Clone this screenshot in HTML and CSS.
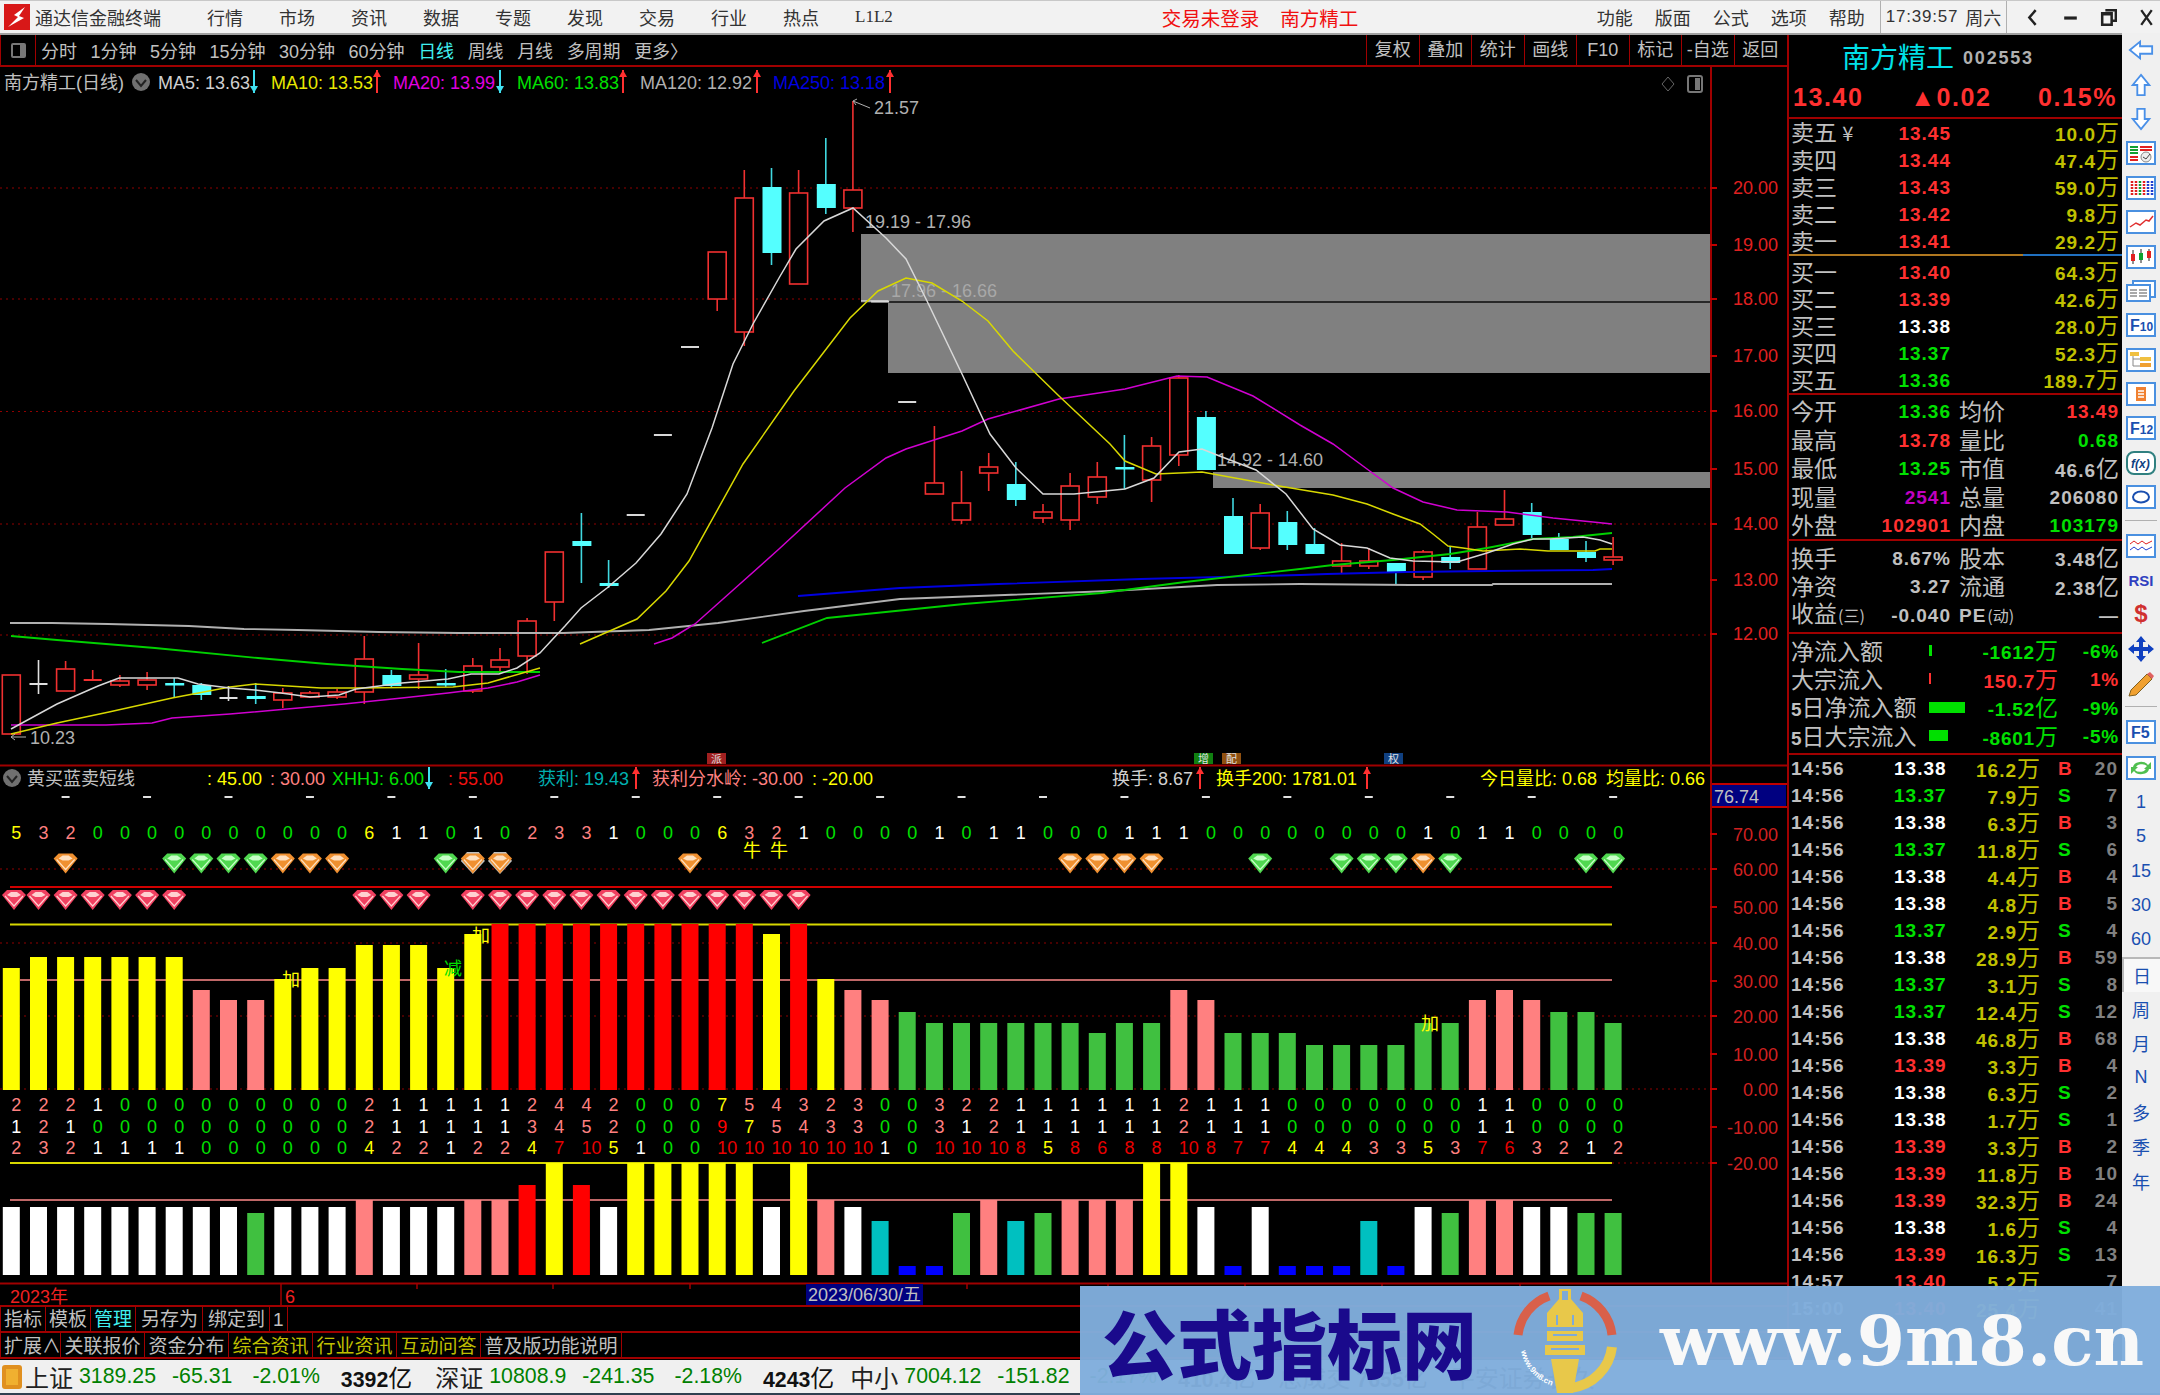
FILE: index.html
```html
<!DOCTYPE html>
<html lang="zh-CN">
<head>
	<meta charset="UTF-8">
	<title>通达信金融终端</title>
	<link rel="stylesheet" href="styles.css">
</head>
<body>
	<!-- 标题栏 -->
	<div class="title-bar">
		<svg class="app-logo" viewBox="0 0 26 26"><rect width="26" height="26" fill="#d81818"/><path d="M21 3 L10 11 L14 13 L4 23 L20 14 L15 12 Z" fill="#fff"/></svg>
		<span class="app-name">通达信金融终端</span>
		<div class="menu">
			<span>行情</span><span>市场</span><span>资讯</span><span>数据</span><span>专题</span><span>发现</span><span>交易</span><span>行业</span><span>热点</span><span class="menu-l2">L1L2</span>
		</div>
		<div class="title-mid"><span>交易未登录</span><span>南方精工</span></div>
		<div class="menu menu-right">
			<span>功能</span><span>版面</span><span>公式</span><span>选项</span><span>帮助</span>
		</div>
		<div class="clock"><span class="clock-time">17:39:57</span><span>周六</span></div>
		<div class="win-btns">
			<svg viewBox="0 0 16 20"><path d="M11 3 L5 10 L11 17" fill="none" stroke="#222" stroke-width="2.4"/></svg>
			<svg viewBox="0 0 16 20"><rect x="2" y="9" width="12" height="3" fill="#222"/></svg>
			<svg viewBox="0 0 16 20"><path d="M5 3 H15 V13 H12 M2 7 H11 V17 H2 Z M2 7 V6 H11 V7" fill="none" stroke="#222" stroke-width="2.4"/></svg>
			<svg viewBox="0 0 16 20"><path d="M3 3 L13 17 M13 3 L3 17" fill="none" stroke="#222" stroke-width="2.2"/></svg>
		</div>
	</div>

	<div class="main">
		<div class="left-col">
			<!-- 周期工具条 -->
			<div class="tool-bar">
				<div class="tool-switch"><i class="switch-ico"></i></div>
				<div class="period">
					<span>分时</span><span>1分钟</span><span>5分钟</span><span>15分钟</span><span>30分钟</span><span>60分钟</span><span class="period-on">日线</span><span>周线</span><span>月线</span><span>多周期</span><span>更多〉</span>
				</div>
				<div class="tool-btns">
					<span>复权</span><span>叠加</span><span>统计</span><span>画线</span><span>F10</span><span>标记</span><span>-自选</span><span>返回</span>
				</div>
			</div>

			<!-- K线和指标都画在这里,见 script.js -->
			<svg id="cv" class="cv" viewBox="0 66 1787 1240" width="1787" height="1240"></svg>

			<div class="tab-row">
				<span>指标</span><span>模板</span><span class="tab-on">管理</span><span>另存为</span><span>绑定到</span><span>1</span>
			</div>
			<div class="tab-row tab-row2">
				<span>扩展∧</span><span>关联报价</span><span>资金分布</span><span class="tab-y">综合资讯</span><span class="tab-y">行业资讯</span><span class="tab-y">互动问答</span><span>普及版功能说明</span>
			</div>
		</div>

		<!-- 右侧盘口 -->
		<div class="quote">
			<div class="q-name"><span class="q-title">南方精工</span><span class="q-code">002553</span></div>
			<div class="q-price"><span>13.40</span><span>▲0.02</span><span>0.15%</span></div>

			<div class="q-sec q-sell">
				<div class="q-row"><div class="half"><span class="lb">卖五 <small>¥</small></span><b class="red">13.45</b></div><div class="half end"><b class="vol">10.0<em>万</em></b></div></div>
				<div class="q-row"><div class="half"><span class="lb">卖四</span><b class="red">13.44</b></div><div class="half end"><b class="vol">47.4<em>万</em></b></div></div>
				<div class="q-row"><div class="half"><span class="lb">卖三</span><b class="red">13.43</b></div><div class="half end"><b class="vol">59.0<em>万</em></b></div></div>
				<div class="q-row"><div class="half"><span class="lb">卖二</span><b class="red">13.42</b></div><div class="half end"><b class="vol">9.8<em>万</em></b></div></div>
				<div class="q-row"><div class="half"><span class="lb">卖一</span><b class="red">13.41</b></div><div class="half end"><b class="vol">29.2<em>万</em></b></div></div>
			</div>
			<div class="q-split"><i></i></div>
			<div class="q-sec q-buy">
				<div class="q-row"><div class="half"><span class="lb">买一</span><b class="red">13.40</b></div><div class="half end"><b class="vol">64.3<em>万</em></b></div></div>
				<div class="q-row"><div class="half"><span class="lb">买二</span><b class="red">13.39</b></div><div class="half end"><b class="vol">42.6<em>万</em></b></div></div>
				<div class="q-row"><div class="half"><span class="lb">买三</span><b class="wht">13.38</b></div><div class="half end"><b class="vol">28.0<em>万</em></b></div></div>
				<div class="q-row"><div class="half"><span class="lb">买四</span><b class="grn">13.37</b></div><div class="half end"><b class="vol">52.3<em>万</em></b></div></div>
				<div class="q-row"><div class="half"><span class="lb">买五</span><b class="grn">13.36</b></div><div class="half end"><b class="vol">189.7<em>万</em></b></div></div>
			</div>

			<div class="q-sec q-info">
				<div class="q-row"><div class="half"><span class="lb">今开</span><b class="grn">13.36</b></div><div class="half"><span class="lb">均价</span><b class="red">13.49</b></div></div>
				<div class="q-row"><div class="half"><span class="lb">最高</span><b class="red">13.78</b></div><div class="half"><span class="lb">量比</span><b class="grn">0.68</b></div></div>
				<div class="q-row"><div class="half"><span class="lb">最低</span><b class="grn">13.25</b></div><div class="half"><span class="lb">市值</span><b class="gry">46.6<em>亿</em></b></div></div>
				<div class="q-row"><div class="half"><span class="lb">现量</span><b class="pur">2541</b></div><div class="half"><span class="lb">总量</span><b class="gry">206080</b></div></div>
				<div class="q-row"><div class="half"><span class="lb">外盘</span><b class="red">102901</b></div><div class="half"><span class="lb">内盘</span><b class="grn">103179</b></div></div>
			</div>

			<div class="q-sec q-stat">
				<div class="q-row"><div class="half"><span class="lb">换手</span><b class="gry">8.67%</b></div><div class="half"><span class="lb">股本</span><b class="gry">3.48<em>亿</em></b></div></div>
				<div class="q-row"><div class="half"><span class="lb">净资</span><b class="gry">3.27</b></div><div class="half"><span class="lb">流通</span><b class="gry">2.38<em>亿</em></b></div></div>
				<div class="q-row"><div class="half"><span class="lb">收益<small class="lb-sm">(三)</small></span><b class="gry">-0.040</b></div><div class="half"><span class="lb"><b class="gry">PE</b><small class="lb-sm">(动)</small></span><b class="gry">—</b></div></div>
			</div>

			<div class="q-sec q-flow">
				<div class="f-row"><span class="lb">净流入额</span><i class="f-bar bg-grn f-b3"></i><b class="grn">-1612<em>万</em></b><b class="grn">-6%</b></div>
				<div class="f-row"><span class="lb">大宗流入</span><i class="f-bar bg-red f-b2"></i><b class="red">150.7<em>万</em></b><b class="red">1%</b></div>
				<div class="f-row"><span class="lb"><b class="gry">5</b>日净流入额</span><i class="f-bar bg-grn f-b36"></i><b class="grn">-1.52<em>亿</em></b><b class="grn">-9%</b></div>
				<div class="f-row"><span class="lb"><b class="gry">5</b>日大宗流入</span><i class="f-bar bg-grn f-b19"></i><b class="grn">-8601<em>万</em></b><b class="grn">-5%</b></div>
			</div>

			<div id="ticks" class="ticks"></div>
		</div>

		<!-- 最右工具条 -->
		<div class="side">
			<div class="s-item"><svg class="s-arrow" viewBox="0 0 28 22"><path d="M2 11 L13 2 V7 H26 V15 H13 V20 Z"/></svg></div>
			<div class="s-item"><svg class="s-arrow" viewBox="0 0 22 26"><path d="M11 2 L20 13 H15 V24 H7 V13 H2 Z"/></svg></div>
			<div class="s-item"><svg class="s-arrow" viewBox="0 0 22 26"><path d="M11 24 L20 13 H15 V2 H7 V13 H2 Z"/></svg></div>
			<div class="s-item"><svg class="ic" viewBox="0 0 26 20"><path d="M2 4 H10 M2 7 H10 M2 10 H10" stroke="#10a030" stroke-width="2"/><path d="M12 4 H24 M12 7 H24" stroke="#e02020" stroke-width="2"/><path d="M2 14 H10 M2 17 H10" stroke="#e02020" stroke-width="2"/><circle cx="18" cy="14" r="5" fill="#eee" stroke="#888"/><path d="M15 14 L18 16 L22 11" fill="none" stroke="#444"/></svg></div>
			<div class="s-item"><svg class="ic" viewBox="0 0 26 20"><path d="M4 3 V17 M8 3 V17" stroke="#e02020" stroke-width="2.5" stroke-dasharray="2 1"/><path d="M12 3 V17" stroke="#10a030" stroke-width="2.5" stroke-dasharray="2 1"/><path d="M16 3 V17" stroke="#e02020" stroke-width="2.5" stroke-dasharray="2 1"/><path d="M20 3 V17 M24 3 V17" stroke="#2040d0" stroke-width="2.5" stroke-dasharray="2 1"/></svg></div>
			<div class="s-item"><svg class="ic" viewBox="0 0 26 20"><path d="M2 15 L8 11 L12 13 L18 8 L21 9 L25 4" fill="none" stroke="#e03030" stroke-width="1.5"/></svg></div>
			<div class="s-item"><svg class="ic" viewBox="0 0 26 20"><path d="M5 3 V17 M13 2 V16 M21 2 V14" stroke="#222"/><rect x="3" y="7" width="4" height="7" fill="#e02020"/><rect x="11" y="6" width="4" height="7" fill="#10a030"/><rect x="19" y="4" width="4" height="7" fill="#e02020"/></svg></div>
			<div class="s-item"><svg class="ic ic-win" viewBox="0 0 30 22"><rect x="7" y="1" width="22" height="16" fill="#fff" stroke="#4a90e0" stroke-width="2"/><rect x="1" y="5" width="23" height="16" fill="#fff" stroke="#4a90e0" stroke-width="2"/><path d="M4 10 H11 M4 13 H11 M4 16 H11 M13 10 H21 M13 13 H21 M13 16 H21" stroke="#555"/></svg></div>
			<div class="s-item"><svg class="ic" viewBox="0 0 26 20"><text x="2" y="16" class="ic-f" fill="#1a4fb0">F<tspan font-size="12">10</tspan></text></svg></div>
			<div class="s-item"><svg class="ic" viewBox="0 0 26 20"><path d="M5 3 V16 H12 M5 9 H12" fill="none" stroke="#888"/><rect x="2" y="2" width="9" height="4" fill="#f0c040"/><rect x="12" y="7" width="11" height="4" fill="#f0c040"/><rect x="12" y="13" width="11" height="4" fill="#f0a030"/></svg></div>
			<div class="s-item"><svg class="ic" viewBox="0 0 26 20"><rect x="8" y="3" width="10" height="14" fill="#f08030"/><path d="M10 7 H16 M10 10 H16 M10 13 H16" stroke="#fff" stroke-width="1.5"/></svg></div>
			<div class="s-item"><svg class="ic" viewBox="0 0 26 20"><text x="2" y="16" class="ic-f" fill="#1a4fb0">F<tspan font-size="12">12</tspan></text></svg></div>
			<div class="s-item"><svg class="ic ic-round" viewBox="0 0 26 20"><text x="3" y="15" class="ic-fx" fill="#104080">f(x)</text></svg></div>
			<div class="s-item"><svg class="ic" viewBox="0 0 26 20"><ellipse cx="13" cy="10" rx="8" ry="5.5" fill="none" stroke="#1a4fb0" stroke-width="2"/></svg></div>
			<div class="s-sep"></div>
			<div class="s-item"><svg class="ic" viewBox="0 0 26 20"><path d="M2 8 L6 5 L10 8 L14 5 L18 8 L24 5" fill="none" stroke="#e02020"/><path d="M2 14 L6 11 L10 14 L14 11 L18 14 L24 11" fill="none" stroke="#2040d0"/></svg></div>
			<div class="s-item"><span class="s-rsi">RSI</span></div>
			<div class="s-item"><span class="s-dollar">$</span></div>
			<div class="s-item"><svg class="s-move" viewBox="0 0 28 28"><path d="M14 1 L19 7 H16 V12 H21 V9 L27 14 L21 19 V16 H16 V21 H19 L14 27 L9 21 H12 V16 H7 V19 L1 14 L7 9 V12 H12 V7 H9 Z" fill="#1040c0"/></svg></div>
			<div class="s-item"><svg class="s-move" viewBox="0 0 28 28"><path d="M4 21 L20 5 L25 10 L9 26 L2 27 Z" fill="#f0a030" stroke="#806020"/><path d="M20 5 L25 10 L27 7 L23 3 Z" fill="#e06060"/></svg></div>
			<div class="s-sep"></div>
			<div class="s-item"><svg class="ic" viewBox="0 0 26 20"><text x="3" y="16" class="ic-f" fill="#1a4fb0">F5</text></svg></div>
			<div class="s-item s-refresh"><svg class="ic" viewBox="0 0 26 20"><path d="M5 9 A8 6 0 0 1 20 7 L23 4 V11 H16 L19 8 A6 4 0 0 0 8 10 Z M21 11 A8 6 0 0 1 6 13 L3 16 V9 H10 L7 12 A6 4 0 0 0 18 10 Z" fill="#50c050"/></svg></div>
			<div class="s-item s-txt">1</div>
			<div class="s-item s-txt">5</div>
			<div class="s-item s-txt">15</div>
			<div class="s-item s-txt">30</div>
			<div class="s-item s-txt">60</div>
			<div class="s-item s-txt s-on">日</div>
			<div class="s-item s-txt">周</div>
			<div class="s-item s-txt">月</div>
			<div class="s-item s-txt">N</div>
			<div class="s-item s-txt">多</div>
			<div class="s-item s-txt">季</div>
			<div class="s-item s-txt">年</div>
		</div>
	</div>

	<!-- 底部指数条 -->
	<div class="status">
		<i class="st-ico"></i>
		<span class="st-name">上证</span><span class="st-g st-a">3189.25</span><span class="st-g st-b">-65.31</span><span class="st-g st-c">-2.01%</span><span class="st-k st-d">3392<em>亿</em></span>
		<span class="st-name st-n2">深证</span><span class="st-g st-a">10808.9</span><span class="st-g st-b">-241.35</span><span class="st-g st-c">-2.18%</span><span class="st-k st-d">4243<em>亿</em></span>
		<span class="st-name st-n3">中小</span><span class="st-g st-a">7004.12</span><span class="st-g st-b">-151.82</span><span class="st-g st-c">-2.17%</span><span class="st-k st-d">410.4<em>亿</em></span>
		<span class="st-name st-n2">总成交</span><span class="st-k st-a">7655<em>亿</em></span><span class="st-name st-n2">平安证券长久</span>
	</div>

	<!-- 水印 -->
	<div class="mark">
		<span class="mark-cn">公式指标网</span>
		<svg class="mark-logo" viewBox="0 0 104 104">
			<defs><path id="ring" d="M8 62 A46 46 0 0 0 44 98"/></defs>
			<path d="M5 46 A47 47 0 0 1 36 7" fill="none" stroke="#d8604a" stroke-width="9"/>
			<path d="M68 7 A47 47 0 0 1 99 46" fill="none" stroke="#d8604a" stroke-width="9"/>
			<path d="M99 58 A47 47 0 0 1 58 99" fill="none" stroke="#e8c84a" stroke-width="10"/>
			<path d="M46 0 H58 V10 L70 24 V38 H34 V24 L46 10 Z M34 42 H70 V52 H34 Z M32 56 H72 V66 H32 Z M38 70 H66 L60 104 H44 Z" fill="#e8c84a"/>
			<path d="M50 3 H54 V10 H50 Z M44 26 V36 M60 26 V36 M40 46 H64 M38 60 H66" fill="#7eaad8" stroke="#7eaad8" stroke-width="2"/>
			<text class="mark-ring" fill="#fff"><textPath href="#ring">www.9m8.cn</textPath></text>
		</svg>
		<span class="mark-site">www.9m8.cn</span>
	</div>

	<script src="script.js"></script>
</body>
</html>
```

FILE: styles.css
```css
*{
	margin: 0;
	padding: 0;
	box-sizing: border-box;
}
html,body{
	width: 2160px;
	height: 1395px;
	overflow: hidden;
	background: #000;
	font-family: "Liberation Sans","Noto Sans CJK SC",sans-serif;
	font-size: 18px;
}
em{
	font-style: normal;
	font-family: "Noto Sans CJK SC",sans-serif;
	font-weight: 400;
}

/* 标题栏 */
.title-bar{
	display: flex;
	align-items: center;
	height: 35px;
	background: #f2f2f2;
	border-top: 1px solid #c8c8c8;
	border-bottom: 2px solid #a0a0a0;
	color: #333;
	font-family: "Noto Sans CJK SC",sans-serif;
}
.app-logo{
	width: 26px;
	height: 26px;
	margin-left: 4px;
}
.app-name{
	margin-left: 5px;
	width: 172px;
}
.menu{
	display: flex;
	align-items: center;
	gap: 36px;
	font-size: 18px;
}
.menu-l2{
	font-size: 17px;
	font-family: "Liberation Serif",serif;
}
.title-mid{
	display: flex;
	gap: 21px;
	color: #f01010;
	font-size: 19.5px;
	margin-left: 269px;
	width: 435px;
}
.menu-right{
	gap: 22px;
	width: 283px;
}
.clock{
	display: flex;
	gap: 7px;
	height: 32px;
	padding: 0 5px 0 5px;
	align-items: center;
	border-left: 1px solid #b0b0b0;
	border-right: 1px solid #b0b0b0;
}
.clock-time{
	font-family: "Liberation Sans",sans-serif;
	font-size: 17px;
	letter-spacing: .8px;
}
.win-btns{
	display: flex;
	gap: 21px;
	margin-left: 17px;
}
.win-btns svg{
	width: 17px;
	height: 21px;
}

.main{
	display: flex;
	height: 1325px;
}
.left-col{
	width: 1787px;
	flex: none;
}

/* 工具条 */
.tool-bar{
	display: flex;
	height: 32px;
	border-bottom: 2px solid #a00000;
	color: #c0c0c0;
}
.tool-switch{
	display: flex;
	align-items: center;
	justify-content: center;
	width: 36px;
	border-right: 1px solid #a00000;
	border-left: 1px solid #a00000;
}
.switch-ico{
	display: block;
	width: 15px;
	height: 15px;
	border: 2px solid #777;
	border-radius: 2px;
	border-right-width: 6px;
}
.period{
	display: flex;
	align-items: center;
	gap: 13.5px;
	margin-left: 5px;
	flex: 1;
}
.period-on{
	color: #40f0f0;
}
.tool-btns{
	display: flex;
	margin-right: 1px;
}
.tool-btns span{
	width: 52.5px;
	text-align: center;
	line-height: 30px;
	border-left: 1px solid #a00000;
}

/* 画布 */
.cv{
	display: block;
}
.cv text{
	font-family: "Liberation Sans","Noto Sans CJK SC",sans-serif;
}

/* 底部标签 */
.tab-row{
	display: flex;
	height: 26px;
	border-bottom: 2px solid #a00000;
	color: #c0c0c0;
	font-size: 19px;
	line-height: 26px;
}
.tab-row span{
	height: 24px;
	padding: 0 3px;
	border-right: 1px solid #a00000;
	white-space: nowrap;
}
.tab-row span:first-child{
	padding-left: 3px;
	border-left: 1px solid #a00000;
}
.tab-row span:nth-child(4),.tab-row span:nth-child(5){
	padding: 0 4px 0 5px;
}
.tab-on{
	color: #40f0f0;
}
.tab-row2{
	line-height: 28px;
}
.tab-row2 span,.tab-row2 span:nth-child(4),.tab-row2 span:nth-child(5){
	padding: 0 3.5px;
}
.tab-row2 span:first-child{
	width: 61px;
}
.tab-row2 .tab-y{
	color: #c0c000;
}

/* 右侧盘口 */
.quote{
	width: 335px;
	flex: none;
	overflow: hidden;
	border-left: 2px solid #a00000;
	color: #c0c0c0;
	font-family: "Noto Sans CJK SC",sans-serif;
	font-size: 23px;
}
.q-name{
	display: flex;
	align-items: center;
	height: 40px;
	padding-left: 53px;
}
.q-title{
	font-size: 28px;
	color: #00e0e8;
	line-height: 38px;
	margin-top: 2px;
}
.q-code{
	margin: 7px 0 0 9px;
	font: bold 18px "Liberation Sans",sans-serif;
	letter-spacing: 1.8px;
	color: #b0b0b0;
}
.q-price{
	display: flex;
	justify-content: space-between;
	height: 44px;
	padding: 3px 5px 0 4px;
	align-items: center;
	border-bottom: 2px solid #a00000;
	font: bold 25px "Liberation Sans",sans-serif;
	letter-spacing: 1.6px;
	color: #ff3030;
}
.q-row{
	display: grid;
	grid-template-columns: 160px 160px;
	gap: 8px;
	padding-left: 2px;
}
.half{
	display: flex;
	justify-content: space-between;
	align-items: center;
	height: 100%;
}
.q-sec b,.f-row b,.tk b{
	font: bold 19px/19px "Liberation Sans",sans-serif;
	letter-spacing: 1px;
}
.half > b{
	margin-top: 2px;
}
.end{
	justify-content: flex-end;
}
.q-sec em,.tk em{
	font-size: 23px;
	line-height: 19px;
	letter-spacing: 0;
}
.lb{
	line-height: 23px;
	white-space: nowrap;
}
.lb small{
	font-size: 20px;
}
.lb .lb-sm{
	font-size: 16px;
	margin-left: 1px;
}
.red{
	color: #ff3030;
}
.grn{
	color: #00e000;
}
.wht{
	color: #fff;
}
.gry{
	color: #c0c0c0;
}
.pur{
	color: #c000c0;
}
.vol{
	color: #c0c000;
}
.q-sell .q-row,.q-buy .q-row{
	height: 26.9px;
}
.q-sell{
	height: 135px;
}
.q-split{
	height: 2px;
	background: #b07820;
}
.q-split i{
	display: block;
	width: 99px;
	height: 2px;
	margin-left: auto;
	background: #2070c0;
}
.q-buy{
	height: 139px;
	border-bottom: 2px solid #a00000;
	padding-top: 2px;
}
.q-info{
	height: 146px;
	padding-top: 1.5px;
	border-bottom: 2px solid #a00000;
}
.q-info .q-row,.q-stat .q-row,.f-row{
	height: 28.5px;
}
.q-stat{
	height: 93px;
	padding-top: 2px;
	border-bottom: 2px solid #a00000;
}
.q-flow{
	height: 121px;
	padding-top: 2px;
	border-bottom: 2px solid #a00000;
}
.f-row{
	display: grid;
	grid-template-columns: 138px 45px 84px 61px;
	align-items: center;
	padding-left: 2px;
}
.f-row b{
	text-align: right;
	letter-spacing: .8px;
}
.f-row > b{
	margin-top: 2px;
}
.f-row .lb b{
	letter-spacing: 0;
}
.f-bar{
	display: block;
	height: 11px;
}
.bg-grn{
	background: #00e000;
}
.bg-red{
	background: #ff3030;
}
.f-b3{
	width: 3px;
}
.f-b2{
	width: 2px;
}
.f-b36{
	width: 36px;
}
.f-b19{
	width: 19px;
}

/* 分笔 */
.tk{
	display: grid;
	grid-template-columns: 103px 52px 94px 18px 20px 40px;
	align-items: center;
	height: 27.03px;
	padding-left: 2px;
}
.tk-r{
	text-align: right;
}
.tk-t{
	color: #c0c0c0;
}
.tk-n{
	color: #808080;
	text-align: right;
}
.tk-g{
	grid-column: 5;
}

/* 最右工具条 */
.side{
	display: flex;
	flex-direction: column;
	align-items: center;
	flex: 1;
	margin-top: -2px;
	background: #f0f0f0;
	color: #1a4fb0;
}
.s-item{
	display: flex;
	align-items: center;
	justify-content: center;
	flex: none;
	width: 100%;
	height: 34.4px;
}
.s-refresh{
	margin-top: 2px;
}
.s-sep{
	flex: none;
	width: 32px;
	height: 14px;
	background: linear-gradient(#f0f0f0 6px,#b0b0b0 6px,#b0b0b0 7px,#f0f0f0 7px);
}
.s-arrow{
	height: 24px;
	width: 26px;
	fill: #fff;
	stroke: #4a90e8;
	stroke-width: 2;
}
.ic{
	width: 30px;
	height: 24px;
	background: #fff;
	border: 2px solid #4a90e0;
}
.ic-win{
	border: none;
	background: none;
}
.ic-round{
	border-radius: 8px;
	border-color: #308080;
}
.ic-f{
	font: 700 16px "Liberation Sans",sans-serif;
}
.ic-fx{
	font: italic 700 12px "Liberation Sans",sans-serif;
}
.s-rsi{
	font: bold 15px "Liberation Sans",sans-serif;
	color: #3040c0;
}
.s-dollar{
	font: bold 24px "Liberation Sans",sans-serif;
	color: #d03030;
}
.s-move{
	width: 28px;
	height: 28px;
}
.s-txt{
	font-size: 18px;
	font-family: "Liberation Sans","Noto Sans CJK SC",sans-serif;
}
.s-on{
	background: #f8f8f8;
	border-top: 2px solid #b8b8b8;
	border-left: 2px solid #b8b8b8;
}

/* 底部指数条 */
.status{
	display: flex;
	align-items: center;
	height: 35px;
	background: #f0f0f0;
	border-bottom: 2px solid #304050;
	font-size: 21.3px;
	white-space: nowrap;
}
.st-ico{
	display: block;
	width: 20px;
	height: 24px;
	margin-left: 2px;
	background: #f0b030;
	border: 4px solid #e09020;
	border-radius: 3px;
}
.st-name{
	margin-left: 3px;
	font-family: "Noto Sans CJK SC",sans-serif;
	font-size: 24px;
	color: #222;
}
.st-n2{
	margin-left: 23px;
}
.st-n3{
	margin-left: 16px;
}
.st-g{
	color: #008000;
}
.st-k{
	color: #111;
	font-weight: bold;
}
.st-k em{
	font-size: 24px;
}
.st-a{
	margin-left: 6px;
}
.st-b{
	margin-left: 16px;
}
.st-c{
	margin-left: 20px;
}
.st-d{
	margin-left: 21px;
}

/* 水印盖在最上面 */
.mark{
	position: absolute;
	left: 1080px;
	top: 1286px;
	width: 1080px;
	height: 109px;
	display: flex;
	align-items: center;
	background: rgba(128,173,220,.97);
}
.mark-cn{
	margin-left: 22px;
	width: 411px;
	font: 900 75px "Noto Sans CJK SC",sans-serif;
	color: #1a0a8c;
}
.mark-logo{
	width: 104px;
	height: 104px;
	flex: none;
}
.mark-ring{
	font: bold 8px "Liberation Sans",sans-serif;
}
.mark-site{
	margin-left: 43px;
	font: bold 69.5px "DejaVu Serif",serif;
	color: #f8f8f8;
	white-space: nowrap;
}
```

FILE: script.js
```js
var PINK = "#ff8080", YEL = "#ffff00", RED = "#ff0000", GRN = "#40c040", WHT = "#ffffff", TEAL = "#00c0c0", BLU = "#0000ff";

// 第 i 根K线的中心
function cx(i){
	return 11.3 + 27.15 * i;
}
function t(x,cy,s,c,size,anchor){
	var y = (cy + size * 0.36).toFixed(1);
	return '<text x="' + x + '" y="' + y + '" fill="' + c + '" font-size="' + size + '" text-anchor="' + (anchor || "start") + '">' + s + '</text>';
}
function rect(x,y,w,h,c){
	return '<rect x="' + x + '" y="' + y + '" width="' + w + '" height="' + h + '" fill="' + c + '"/>';
}
function line(x1,y1,x2,y2,c,w,dash){
	return '<line x1="' + x1 + '" y1="' + y1 + '" x2="' + x2 + '" y2="' + y2 + '" stroke="' + c + '" stroke-width="' + (w || 1) + '"' + (dash ? ' stroke-dasharray="' + dash + '"' : '') + '/>';
}
function poly(pts,c,w){
	return '<polyline points="' + pts + '" fill="none" stroke="' + c + '" stroke-width="' + (w || 1.5) + '"/>';
}
// 竖向小箭头,up 为 true 向上
function arrow(x,c,up,y1,y2){
	var s = line(x,y1,x,y2,c,2);
	if(up){
		s += '<polygon points="' + (x - 4) + ',' + (y1 + 7) + ' ' + x + ',' + y1 + ' ' + (x + 4) + ',' + (y1 + 7) + '" fill="' + c + '"/>';
	}else{
		s += '<polygon points="' + (x - 4) + ',' + (y2 - 7) + ' ' + x + ',' + y2 + ' ' + (x + 4) + ',' + (y2 - 7) + '" fill="' + c + '"/>';
	}
	return s;
}
function tickRow(y,x2){
	return line(x2 || 1710,y,1717,y,"#c00000",2);
}

var s = "";

/* ---------- 图例 ---------- */
s += t(4,81,"南方精工(日线)","#c0c0c0",18);
s += '<circle cx="141" cy="81" r="9" fill="#707070"/><path d="M136 79 L141 85 L146 79" fill="none" stroke="#222" stroke-width="2"/>';
s += t(158,81,"MA5: 13.63","#d0d0d0",18);
s += arrow(254,"#40e0f0",false,69,92);
s += t(271,81,"MA10: 13.53","#e8e800",18);
s += arrow(377,"#ff3030",true,69,92);
s += t(393,81,"MA20: 13.99","#e000e0",18);
s += arrow(500,"#40e0f0",false,69,92);
s += t(517,81,"MA60: 13.83","#00e000",18);
s += arrow(623,"#ff3030",true,69,92);
s += t(640,81,"MA120: 12.92","#b0b0b0",18);
s += arrow(757,"#ff3030",true,69,92);
s += t(773,81,"MA250: 13.18","#0000e0",18);
s += arrow(890,"#ff3030",true,69,92);
s += '<path d="M1668 76 L1674 83 L1668 90 L1662 83 Z" fill="none" stroke="#666"/>';
s += '<rect x="1688" y="75" width="14" height="16" rx="2" fill="none" stroke="#777" stroke-width="2"/>' + rect(1695,77,5,12,"#777");

/* ---------- 坐标轴和虚线 ---------- */
s += line(0,764.5,1787,764.5,"#a00000",2);
s += line(1711,66,1711,1282,"#a00000",2);

var dots = [187,298,410.5,523,634];
var i;
for(i=0;i<dots.length;i++){
	s += line(0,dots[i],1710,dots[i],"#900000",1.2,"2 4");
}
var dots2 = [868,942,1015,1088];
for(i=0;i<dots2.length;i++){
	s += line(0,dots2[i],1710,dots2[i],"#900000",1.2,"2 4");
}
s += line(1612,1162,1710,1162,"#900000",1.2,"2 4");

var axis = [["20.00",187],["19.00",244],["18.00",298],["17.00",355],["16.00",410],["15.00",468],["14.00",523],["13.00",579],["12.00",633]];
for(i=0;i<axis.length;i++){
	s += tickRow(axis[i][1]) + t(1733,axis[i][1] - 1,axis[i][0],"#e02020",18);
}
var axis2 = [["70.00",833],["60.00",868],["50.00",906],["40.00",942],["30.00",980],["20.00",1015],["10.00",1053],["0.00",1088],["-10.00",1126],["-20.00",1162]];
for(i=0;i<axis2.length;i++){
	s += tickRow(axis2[i][1]) + t(1778,axis2[i][1],axis2[i][0],"#d02020",18,"end");
}

/* ---------- 区间灰块 ---------- */
s += rect(861,233,849,67,"#808080") + rect(888,302,822,70,"#808080") + rect(1213,471,497,16,"#808080");
s += line(861,301,1710,301,"#282828",2);
s += line(861,300,888,300,"#d0d0d0",1.5);
s += t(865,220,"19.19 - 17.96","#b0b0b0",18);
s += t(891,289,"17.96 - 16.66","#a8a8a8",18);
s += t(1217,458,"14.92 - 14.60","#b0b0b0",18);

/* ---------- K线 ---------- */
// 类型 r红空心 c青实心 w白十字 d只有横线
var K = [
	["r",674,733,674,733],["w",683,683,659,693],["r",668,690,660,690],["r",679,679,669,679],["r",680,684,674,686],
	["r",679,684,671,689],["c",682,683,677,697],["c",684,694,682,699],["w",697,697,685,700],["c",695,698,682,703],
	["r",692,699,687,707],["r",692,696,690,697],["r",691,696,688,698],["r",658,691,635,703],["c",674,685,669,686],
	["r",674,678,642,688],["c",682,683,668,686],["r",665,690,657,692],["r",659,666,647,670],["r",620,655,617,673],
	["r",551,601,551,620],["c",540,545,512,582],["c",582,585,559,587],["d",514],["d",434],
	["d",346],["r",251,298,251,310],["r",197,331,169,345],["c",186,252,167,264],["r",192,283,169,283],
	["c",183,207,137,213],["r",189,207,100,231],["d",300.5],["d",401],["r",482,493,425,493],
	["r",502,519,470,523],["r",466,472,452,490],["c",483,499,461,505],["r",511,517,503,522],["r",485,519,472,529],
	["r",476,496,461,503],["c",466,467,434,488],["r",445,479,436,501],["r",377,454,374,465],["c",416,469,410,469],
	["c",515,553,497,553],["r",512,547,503,549],["c",521,544,510,549],["c",543,553,527,553],["r",560,565,542,572],
	["r",560,565,547,568],["c",562,572,562,583],["r",551,576,549,579],["c",556,562,545,568],["r",526,568,511,568],
	["r",518,524,489,524],["c",511,534,502,537],["c",538,549,532,549],["c",551,557,540,561],["r",556,559,536,564]
];
for(i=0;i<K.length;i++){
	var k = K[i], x = cx(i).toFixed(1) * 1;
	if(k[0] == "d"){
		s += line(x - 9,k[1],x + 9,k[1],"#d8d8d8",2);
	}else if(k[0] == "w"){
		s += line(x,k[3],x,k[4],"#e0e0e0",1.6) + line(x - 9,k[1],x + 9,k[1],"#e0e0e0",2);
	}else if(k[0] == "c"){
		s += line(x,k[3],x,k[4],"#40d8e0",1.6);
		s += rect(x - 9,k[1],19,Math.max(k[2] - k[1],2.5),"#54ffff");
	}else{
		s += line(x,k[3],x,k[4],"#f03030",1.6);
		if(k[2] - k[1] > 1){
			s += '<rect x="' + (x - 9) + '" y="' + k[1] + '" width="18" height="' + (k[2] - k[1]) + '" fill="#000" stroke="#f03030" stroke-width="1.6"/>';
		}else{
			s += line(x - 9,k[1],x + 9,k[1],"#f03030",2);
		}
	}
}

/* ---------- 均线 ---------- */
s += poly("10,622 52,622 108,623 189,625 244,628 298,629 379,631 459,632 563,632 649,629 718,622 804,610 900,598 1110,590 1217,584 1300,583 1410,584 1492,584 1493,583 1612,583","#b0b0b0",1.8);
s += poly("798,595 900,587 998,583 1141,578 1300,574 1327,573 1407,571 1490,570 1593,569 1612,568","#0000e0",1.8);
s += poly("11,635 57,639 155,647 258,657 327,663 402,668 459,671 540,671","#00d000",1.8);
s += poly("762,642 827,617 964,603 1102,592 1185,581 1300,568 1333,564 1393,559 1450,553 1487,547 1533,538 1573,536 1612,532","#00d000",1.8);
s += poly("11,724 106,724 152,722 172,717 230,713 287,708 344,703 402,697 448,692 488,687 517,681 540,674","#d000d0");
s += poly("654,643 672,637 695,623 732,590 779,548 845,487 886,457 906,448 962,430 988,418 1059,398 1125,388 1177,375 1207,376 1253,395 1300,424 1333,443 1367,468 1393,487 1423,501 1457,509 1507,511 1553,517 1593,521 1612,523","#d000d0");
s += poly("11,733 57,722 109,711 172,697 230,686 255,683 321,687 356,687 453,686 488,682 540,667","#d8d800");
s += poly("580,643 637,618 666,590 689,560 743,463 794,390 850,317 878,290 906,277 932,282 962,300 988,320 1013,350 1059,395 1110,443 1125,460 1156,473 1202,471 1279,485 1333,494 1367,503 1393,513 1420,523 1433,533 1448,545 1463,547 1483,550 1520,548 1548,550 1595,550 1600,548 1612,548","#d8d800");
s += poly("11,728 57,703 98,685 119,677 178,677 198,683 230,687 255,689 281,692 310,696 339,694 356,688 379,685 402,682 448,678 471,673 499,673 517,667 540,652 551,640 565,625 581,607 607,587 636,562 661,533 687,493 712,427 733,363 753,323 779,277 796,248 824,220 853,207 886,237 906,258 927,300 962,373 990,433 1016,467 1043,493 1074,493 1125,488 1154,477 1179,451 1202,448 1217,454 1256,469 1286,493 1313,528 1340,544 1367,547 1390,557 1413,560 1457,561 1487,552 1513,543 1533,538 1550,538 1583,536 1600,539 1612,543","#d8d8d8");

// 最高最低标注
s += t(874,106,"21.57","#b0b0b0",18);
s += '<path d="M853 100 L870 107 M853 100 L857 98 M853 100 L856 104" fill="none" stroke="#b0b0b0"/>';
s += t(30,736,"10.23","#b0b0b0",18);
s += '<path d="M11 736 H26 M11 736 L15 733 M11 736 L15 739" fill="none" stroke="#b0b0b0"/>';

// 事件小方块
var tags = [[707,"#a02020","派"],[1194,"#108010","增"],[1222,"#905010","配"],[1384,"#104080","权"]];
for(i=0;i<tags.length;i++){
	s += rect(tags[i][0],752,19,11,tags[i][1]) + t(tags[i][0] + 9.5,757.5,tags[i][2],"#e0e0e0",11,"middle");
}

/* ---------- 副图表头 ---------- */
s += '<circle cx="12" cy="777" r="9" fill="#707070"/><path d="M7 775 L12 781 L17 775" fill="none" stroke="#222" stroke-width="2"/>';
s += t(27,777,"黄买蓝卖短线","#c0c0c0",18);
s += t(207,777,": 45.00",YEL,18) + t(270,777,": 30.00",PINK,18) + t(332,777,"XHHJ: 6.00","#00e000",18);
s += arrow(429,"#40e0f0",false,766,788);
s += t(448,777,": 55.00","#f01010",18) + t(538,777,"获利: 19.43","#00b0b0",18);
s += arrow(636,"#ff3030",true,766,788);
s += t(652,777,"获利分水岭: -30.00",PINK,18) + t(812,777,": -20.00",YEL,18);
s += t(1112,777,"换手: 8.67","#d0d0d0",18);
s += arrow(1200,"#ff3030",true,766,788);
s += t(1216,777,"换手200: 1781.01",YEL,18);
s += arrow(1367,"#ff3030",true,766,788);
s += t(1480,777,"今日量比: 0.68",YEL,18) + t(1606,777,"均量比: 0.66",YEL,18);
s += rect(1712,766,74,17,"#000") + line(1712,783,1787,783,"#c00000",2);
s += rect(1712,784,74,22,"#000080") + line(1712,806,1787,806,"#c00000",2);
s += t(1714,795,"76.74","#c0c0c0",18);

/* ---------- 短横线 ---------- */
for(i=2;i<60;i+=3){
	s += line(cx(i) - 4,796,cx(i) + 4,796,"#e0e0e0",2);
}

/* ---------- 顶部数字 ---------- */
var d0 = [5,3,2,0,0,0,0,0,0,0,0,0,0,6,1,1,0,1,0,2,3,3,1,0,0,0,6,3,2,1,0,0,0,0,1,0,1,1,0,0,0,1,1,1,0,0,0,0,0,0,0,0,1,0,1,1,0,0,0,0];
for(i=0;i<60;i++){
	var n = d0[i];
	s += t(cx(i),831,n,n == 0 ? "#00e000" : n == 1 ? WHT : n < 4 ? PINK : YEL,18);
}

/* ---------- 宝石 ---------- */
function gem(x,y,c1,c2){
	return '<g transform="translate(' + x.toFixed(1) + ',' + y + ')"><polygon points="-12,-5 -7,-10 7,-10 12,-5 0,10" fill="' + c1 + '"/>' +
		'<polygon points="-7,-5 -3,-8 3,-8 7,-5 3,-3 -3,-3" fill="' + c2 + '"/><path d="M-9,-4 L0,6 L9,-4" fill="none" stroke="' + c2 + '" stroke-width="1.2"/></g>';
}
// 这两颗外面有一圈灰边
s += '<polygon points="' + (cx(17) - 12) + ',860 ' + (cx(17) - 6) + ',851 ' + (cx(17) + 6) + ',851 ' + (cx(17) + 12) + ',860 ' + cx(17) + ',873" fill="#c0c0c0"/>';
s += '<polygon points="' + (cx(18) - 12) + ',860 ' + (cx(18) - 6) + ',851 ' + (cx(18) + 6) + ',851 ' + (cx(18) + 12) + ',860 ' + cx(18) + ',873" fill="#c0c0c0"/>';
var orange = [2,10,11,12,17,18,25,39,40,41,42,52];
var green = [6,7,8,9,16,46,49,50,51,53,58,59];
for(i=0;i<orange.length;i++){
	s += gem(cx(orange[i]),862.5,"#f09030","#ffe0c0");
}
for(i=0;i<green.length;i++){
	s += gem(cx(green[i]),862.5,"#50d850","#c8ffc8");
}
var reds = [0.1,1,2,3,4,5,6,13,14,15,17,18,19,20,21,22,23,24,25,26,27,28,29];
for(i=0;i<reds.length;i++){
	s += gem(cx(reds[i]),899,"#f04060","#ffd0d0");
}
s += t(752,849,"牛",YEL,18,"middle") + t(779,849,"牛",YEL,18,"middle");

/* ---------- 主柱 ---------- */
s += line(10,886,1612,886,"#d00000",2);
s += line(10,923.5,1612,923.5,"#d8d800",2);
s += line(20,979,1612,979,"#c06868",2);

var top1 = [
	[967,YEL],[956,YEL],[956,YEL],[956,YEL],[956,YEL],[956,YEL],[956,YEL],[989,PINK],[999,PINK],[999,PINK],
	[978,YEL],[967,YEL],[967,YEL],[944,YEL],[944,YEL],[944,YEL],[967,YEL],[933,YEL],[923,RED],[923,RED],
	[923,RED],[923,RED],[923,RED],[923,RED],[923,RED],[923,RED],[923,RED],[923,RED],[933,YEL],[923,RED],
	[978,YEL],[989,PINK],[999,PINK],[1011,GRN],[1022,GRN],[1022,GRN],[1022,GRN],[1022,GRN],[1022,GRN],[1022,GRN],
	[1032,GRN],[1022,GRN],[1022,GRN],[989,PINK],[999,PINK],[1032,GRN],[1032,GRN],[1032,GRN],[1044,GRN],[1044,GRN],
	[1044,GRN],[1044,GRN],[1022,GRN],[1022,GRN],[999,PINK],[989,PINK],[999,PINK],[1011,GRN],[1011,GRN],[1022,GRN]
];
for(i=0;i<60;i++){
	s += rect((cx(i) - 8.5).toFixed(1),top1[i][0],17,1089 - top1[i][0],top1[i][1]);
}
s += t(291,978,"加",YEL,18,"middle") + t(481,934,"加",YEL,18,"middle") + t(453,967,"减","#00e000",18,"middle") + t(1430,1022,"加",YEL,18,"middle");

/* ---------- 下方三行数字 ---------- */
var rA = [2,2,2,1,0,0,0,0,0,0,0,0,0,2,1,1,1,1,1,2,4,4,2,0,0,0,7,5,4,3,2,3,0,0,3,2,2,1,1,1,1,1,1,2,1,1,1,0,0,0,0,0,0,0,1,1,0,0,0,0];
var rB = [1,2,1,0,0,0,0,0,0,0,0,0,0,2,1,1,1,1,1,3,4,5,2,0,0,0,9,7,5,4,3,3,0,0,3,1,2,1,1,1,1,1,1,2,1,1,1,0,0,0,0,0,0,0,1,1,0,0,0,0];
var rC = [2,3,2,1,1,1,1,0,0,0,0,0,0,4,2,2,1,2,2,4,7,10,5,1,0,0,10,10,10,10,10,10,1,0,10,10,10,8,5,8,6,8,8,10,8,7,7,4,4,4,3,3,5,3,7,6,3,2,1,2];
function colAB(n){
	return n == 0 ? "#00e000" : n == 1 ? WHT : n == 7 ? YEL : n == 9 ? RED : PINK;
}
function colC(n){
	return n == 0 ? "#00e000" : n == 1 ? WHT : n < 4 ? PINK : n < 6 ? YEL : "#e80000";
}
for(i=0;i<60;i++){
	s += t(cx(i).toFixed(1),1103,rA[i],colAB(rA[i]),18);
	s += t(cx(i).toFixed(1),1125,rB[i],colAB(rB[i]),18);
	s += t(cx(i).toFixed(1),1146,rC[i],colC(rC[i]),18);
}

/* ---------- 最下面一组柱 ---------- */
s += line(10,1162,1612,1162,"#d8d800",2);
s += line(10,1199,1612,1199,"#c06868",2);
var W = [1206,WHT], G = [1212,GRN], P = [1199,PINK], Y = [1162,YEL], R = [1184,RED], T = [1220,TEAL], B = [1265,BLU];
var bars = [W,W,W,W,W,W,W,W,W,G,W,W,W,P,W,W,W,P,P,R,Y,R,W,Y,Y,Y,Y,Y,W,Y,P,W,T,B,B,G,P,T,G,P,P,P,Y,Y,W,B,W,B,B,B,T,B,W,G,P,P,W,W,G,G];
for(i=0;i<60;i++){
	s += rect((cx(i) - 8.5).toFixed(1),bars[i][0],17,1274 - bars[i][0],bars[i][1]);
}

/* ---------- 时间轴 ---------- */
s += line(0,1282.5,1787,1282.5,"#a00000",2);
s += line(0,1305,1787,1305,"#a00000",2);
s += t(10,1295,"2023年","#f02020",18);
s += line(281,1283,281,1305,"#a00000",1.5) + t(285,1295,"6","#f02020",18);
var ticks = [417,553,690,967,1108,1245,1382,1520];
for(i=0;i<ticks.length;i++){
	s += line(ticks[i],1283,ticks[i],1288,"#a00000",1.5);
}
s += rect(806,1283,117,21,"#000080") + t(808,1293.5,"2023/06/30/五","#c0c0c0",18);

document.getElementById("cv").innerHTML = s;

/* ---------- 分笔明细 ---------- */
var tk = [
	["14:56","13.38","16.2","B","20"],["14:56","13.37","7.9","S","7"],["14:56","13.38","6.3","B","3"],["14:56","13.37","11.8","S","6"],
	["14:56","13.38","4.4","B","4"],["14:56","13.38","4.8","B","5"],["14:56","13.37","2.9","S","4"],["14:56","13.38","28.9","B","59"],
	["14:56","13.37","3.1","S","8"],["14:56","13.37","12.4","S","12"],["14:56","13.38","46.8","B","68"],["14:56","13.39","3.3","B","4"],
	["14:56","13.38","6.3","S","2"],["14:56","13.38","1.7","S","1"],["14:56","13.39","3.3","B","2"],["14:56","13.39","11.8","B","10"],
	["14:56","13.39","32.3","B","24"],["14:56","13.38","1.6","S","4"],["14:56","13.39","16.3","S","13"],["14:57","13.40","5.2","","7"],
	["15:00","13.40","25.4","","41"]
];
var h = "";
for(i=0;i<tk.length;i++){
	var r = tk[i];
	var pc = r[1] == "13.38" ? "wht" : r[1] == "13.37" ? "grn" : "red";
	h += '<div class="tk"><b class="tk-t">' + r[0] + '</b><b class="' + pc + '">' + r[1] + '</b><b class="vol tk-r">' + r[2] + '<em>万</em></b>' +
		'<b class="tk-g ' + (r[3] == "B" ? "red" : "grn") + '">' + r[3] + '</b><b class="tk-n">' + r[4] + '</b></div>';
}
document.getElementById("ticks").innerHTML = h;
```
